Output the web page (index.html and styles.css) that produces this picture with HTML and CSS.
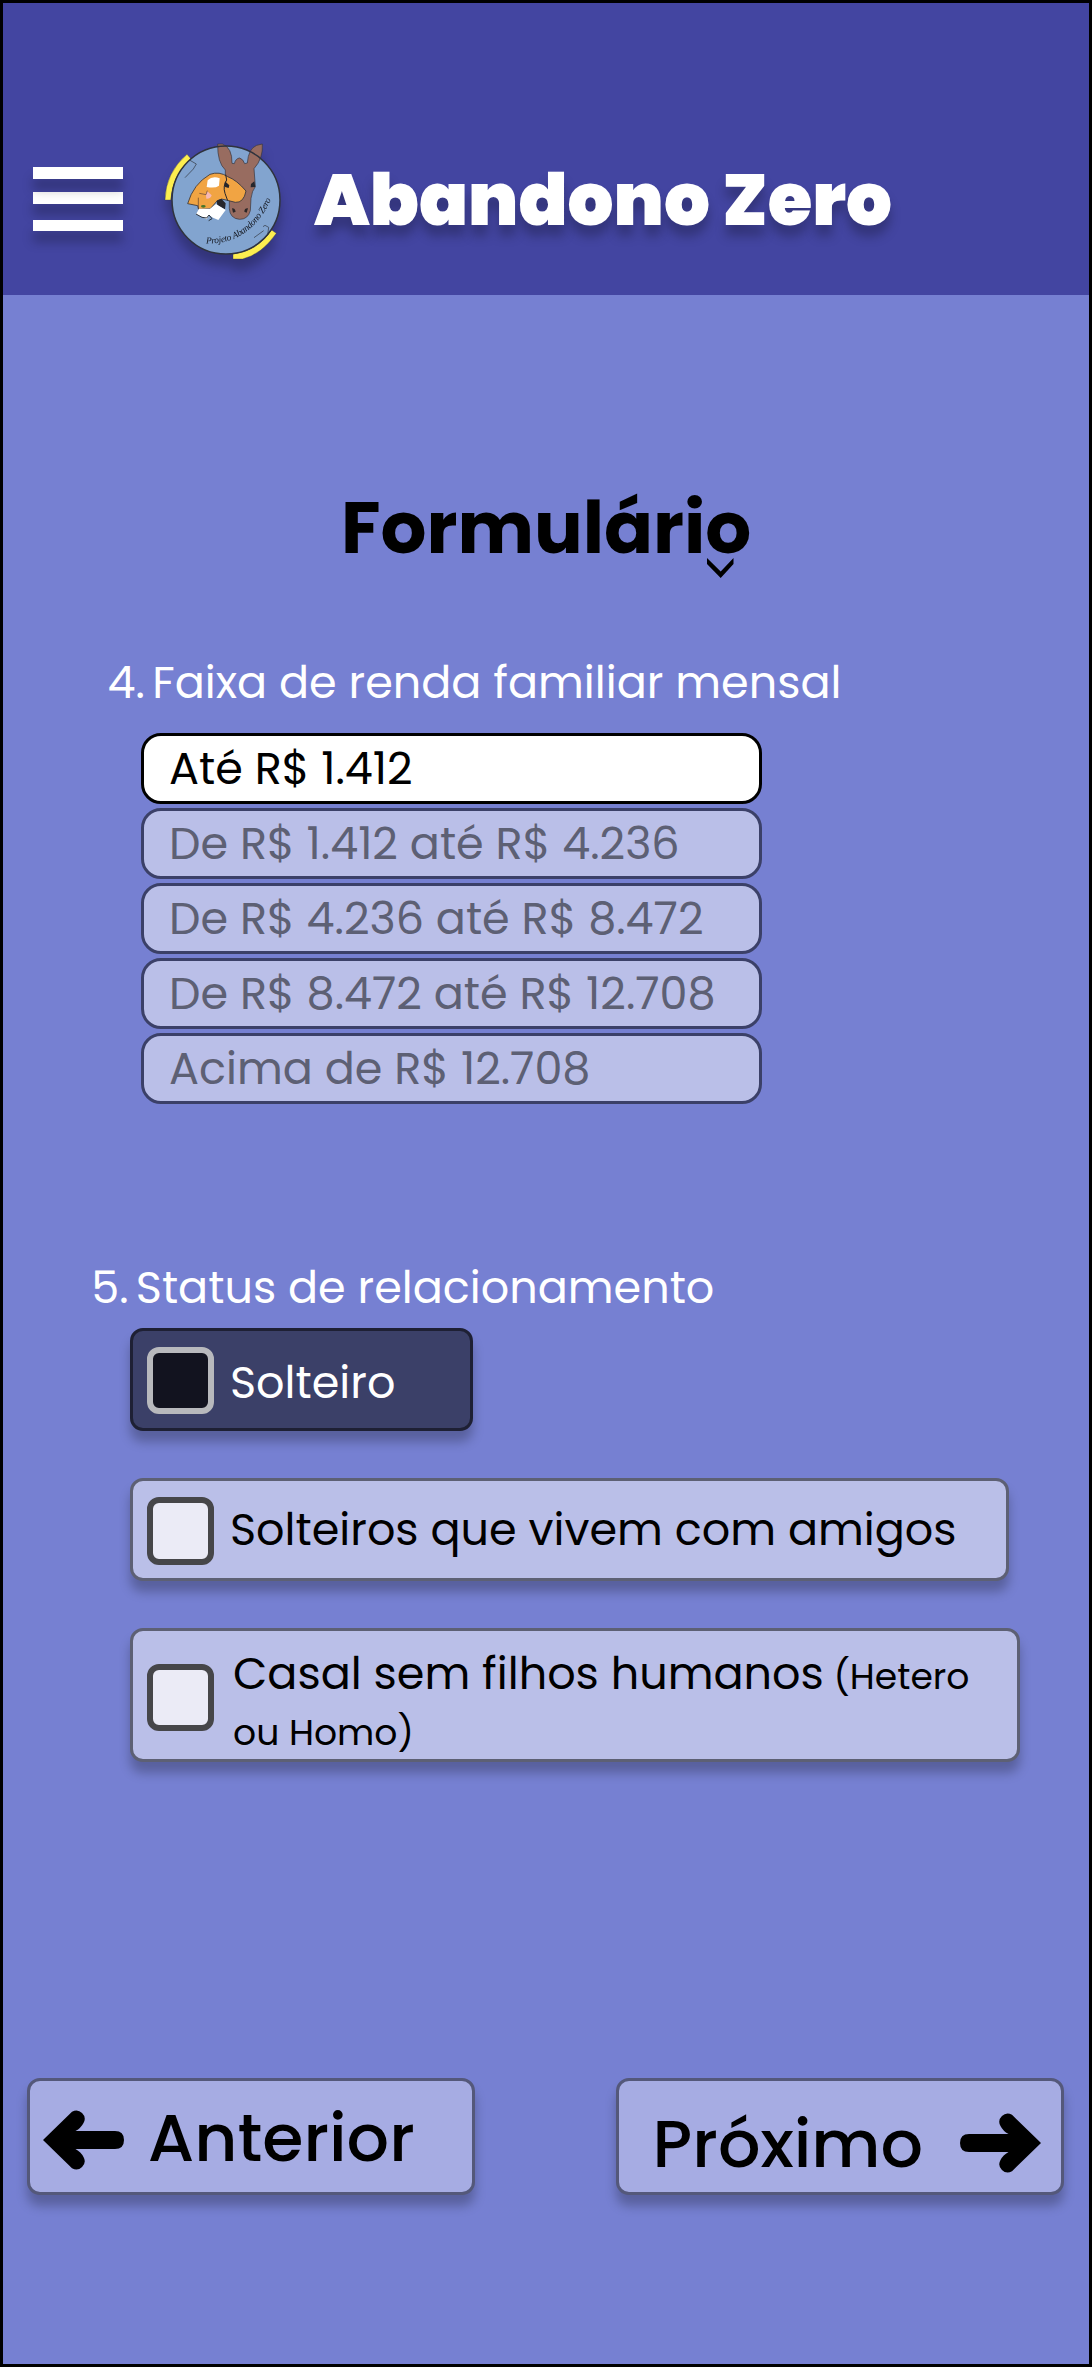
FILE: index.html
```html
<!DOCTYPE html>
<html lang="pt-BR">
<head>
<meta charset="utf-8">
<title>Abandono Zero</title>
<link rel="stylesheet" href="styles.css">
</head>
<body>
<div class="page">
  <header class="topbar">
    <div class="menu"><span class="bar bar-first"></span><span class="bar bar-mid"></span><span class="bar"></span></div>
    <svg class="logo" viewBox="0 0 480 420">
      <path d="M141 73 L154 88 Q98 132 92 210 L75 210 Q77 128 141 73Z" fill="#fdee50" stroke="#33343c" stroke-width="1"/>
      <path d="M395 300 L409 310 Q365 373 308 387 L279 387 L279 372 Q352 364 395 300Z" fill="#fdee50" stroke="#33343c" stroke-width="1"/>
      <circle cx="258" cy="210" r="162" fill="#82a4cf"/>
      <path d="M233 42 L247 42 Q277 53 276 100 L283 101 Q287 85 299 84 Q310 88 314 101 L322 99 Q325 56 350 46 L367 42 Q370 85 342 116 L345 156 L346 170 Q336 182 333 205 L331 242 Q324 268 299 268 Q270 266 268 236 L268 210 L256 170 L256 120 Q232 98 233 42Z" fill="#986c60" stroke="#33343c" stroke-width="2"/>
      <path d="M143 221 Q160 162 210 133 Q238 123 263 140 Q290 150 318 183 Q311 219 286 217 L262 211 Q244 203 232 212 L211 236 L176 238 L173 227Z" fill="#f1a443" stroke="#33343c" stroke-width="2.5"/>
      <path d="M203 151 Q217 137 239 145 L237 167 Q225 176 200 171Z" fill="#fff"/>
      <path d="M257 134 L260 150 Q248 168 255 190 L263 212" fill="none" stroke="#26252b" stroke-width="3"/>
      <path d="M255 154 L268 166 L266 174 L253 170Z M333 162 L343 154 L346 171 L332 172Z M230 212 L244 206 L257 220 L255 238 L232 226Z" fill="#26262c"/>
      <path d="M178 190 L196 194 L202 184 L215 196 Q212 207 199 206 L198 196" fill="#f6b8b5"/>
      <path d="M178 190 L198 194 L202 182 M175 203 L175 237" fill="none" stroke="#5a3d2b" stroke-width="2"/>
      <path d="M177 236 L210 236 L228 222 L257 240 L235 270 L219 263 L208 256 L200 268 L184 260 L168 253Z" fill="#fff"/>
      <path d="M168 252 L186 262 L200 264 L207 255 L216 266 L206 272" fill="none" stroke="#28303a" stroke-width="3"/>
      <ellipse cx="190" cy="229" rx="7" ry="4" fill="#47752b"/>
      <path d="M276 235 Q285 234 287 245 L279 248Z M324 235 Q313 234 313 245 L320 248Z" fill="#2b2627"/>
      <circle cx="258" cy="210" r="162" fill="none" stroke="#2f333d" stroke-width="4.5"/>
      <path d="M150 91 L169 102 L160 117 L135 143 M342 323 L371 302 M369 290 L375 286 L386 292 L383 315" fill="none" stroke="#2f333d" stroke-width="2"/>
      <path id="motto" d="M198 340 Q334 346 398 198" fill="none"/>
      <text class="motto"><textPath href="#motto" textLength="252">Projeto Abandono Zero</textPath></text>
    </svg>
    <div class="brand">Abandono Zero</div>
  </header>

  <h1 class="title">Formulário
    <svg class="chevron" viewBox="0 0 27 20"><path d="M0 0 L13.7 13.4 L26.5 0 V6 L13.7 20 L0 6Z"/></svg>
  </h1>

  <h2 class="question q4"><span class="num">4.</span><span>Faixa de renda familiar mensal</span></h2>
  <div class="options">
    <div class="option selected">Até R$ 1.412</div>
    <div class="option">De R$ 1.412 até R$ 4.236</div>
    <div class="option">De R$ 4.236 até R$ 8.472</div>
    <div class="option">De R$ 8.472 até R$ 12.708</div>
    <div class="option">Acima de R$ 12.708</div>
  </div>

  <h2 class="question q5"><span class="num">5.</span><span>Status de relacionamento</span></h2>
  <div class="cards">
    <div class="card card-on"><span class="check"></span><span class="label">Solteiro</span></div>
    <div class="card card-friends"><span class="check"></span><span class="label">Solteiros que vivem com amigos</span></div>
    <div class="card card-couple"><span class="check"></span><span class="label">Casal sem filhos humanos<small> (Hetero</small><br><small>ou Homo)</small></span></div>
  </div>

  <nav class="nav">
    <div class="button prev">
      <svg class="arrow" viewBox="0 0 82 62"><path d="M0 31 L29 2.8 A8.3 8.3 0 0 1 40.5 14 Q38 19 32.5 22 L72 22 Q81 22 81 31 Q81 40 72 40 L32.5 40 Q38 43 40.5 48 A8.3 8.3 0 0 1 29 59.2Z"/></svg>
      <span class="prev-text">Anterior</span>
    </div>
    <div class="button next">
      <span class="next-text">Próximo</span>
      <svg class="arrow" viewBox="0 0 82 62"><path d="M81 31 L52 2.8 A8.3 8.3 0 0 0 40.5 14 Q43 19 48.5 22 L9 22 Q0 22 0 31 Q0 40 9 40 L48.5 40 Q43 43 40.5 48 A8.3 8.3 0 0 0 52 59.2Z"/></svg>
    </div>
  </nav>
</div>
</body>
</html>
```
FILE: styles.css
```css
* { box-sizing: border-box; }
body { margin: 0; }
.page {
  width: 1092px;
  height: 2367px;
  border: 3px solid #000;
  background: #7680d2;
  font-family: Poppins, Inter, sans-serif;
  font-size: 44.5px;
  color: #000;
  white-space: nowrap;
  overflow: hidden;
}

/* Header */
.topbar {
  display: flex;
  align-items: center;
  height: 292px;
  padding: 103px 0 1px 30px;
  background: #4345a1;
}
.menu { width: 89.5px; height: 66px; }
.bar {
  display: block;
  height: 11.5px;
  margin-bottom: 16px;
  background: #fff;
  box-shadow: 0 11px 11px rgba(0, 0, 0, .25);
}
.bar-first { position: relative; z-index: 1; margin-bottom: 13.5px; }
.logo {
  width: 160px;
  height: 140px;
  margin-left: 17.5px;
  filter: drop-shadow(0 11px 5.5px rgba(0, 0, 0, .25));
}
.motto { font: italic 28px "Liberation Serif", serif; fill: #14171f; }
.brand {
  margin-left: 14px;
  font-size: 72.25px;
  font-weight: 900;
  line-height: 80px;
  color: #fff;
  text-shadow: 0 11px 11px rgba(0, 0, 0, .25);
}

.title {
  position: relative;
  height: 80px;
  margin: 193px 0 0 338px;
  font-size: 72.25px;
  font-weight: 700;
  line-height: 80px;
}
.chevron { position: absolute; left: 366px; top: 70px; width: 27px; height: 20px; }

/* Questions */
.question {
  display: flex;
  margin: 0;
  font-size: 44.5px;
  font-weight: 400;
  line-height: 60px;
  color: #fff;
}
.q4 { margin: 84.5px 0 20.5px 104.5px; }
.q4 .num { width: 44.8px; }
.q5 { margin: 154.3px 0 10px 88.3px; }
.q5 .num { width: 44.5px; }

.options { display: flex; flex-direction: column; gap: 4.3px; width: 621px; margin-left: 138px; }
.option {
  height: 70.7px;
  padding-left: 25px;
  border: 3px solid #3b4068;
  border-radius: 20px;
  background: #babfe8;
  line-height: 65px;
  color: #5d6074;
}
.option.selected { border-color: #000; background: #fff; color: #000; }

.cards { display: flex; flex-direction: column; gap: 47px; margin-left: 127px; }
.card {
  display: flex;
  align-items: center;
  height: 103px;
  padding-left: 14px;
  border: 3px solid #5d6074;
  border-radius: 13px;
  background: #babfe8;
  box-shadow: 0 11px 11px rgba(0, 0, 0, .25);
}
.check {
  flex: none;
  width: 67px;
  height: 67.5px;
  margin-right: 16px;
  border: 6px solid #464649;
  border-radius: 12px;
  background: #ebebf6;
}
.card-on { width: 343px; padding-top: 2px; border-color: #1e2034; background: #3b4068; color: #fff; }
.card-on .check { border-color: #b8b9bd; background: #12131f; }
.card-on .label { padding-top: 4px; }
.card-friends { width: 879px; padding-top: 3px; }
.card-friends .label { padding-bottom: 3px; }
.card-couple { width: 890px; height: 133.7px; padding-top: 5.5px; }
.card-couple .label { padding: 8px 0 0 3px; line-height: 56px; }
.label small { font-size: 36.15px; line-height: 1; }

/* Navigation */
.nav { display: flex; justify-content: space-between; margin: 316.3px 25px 0 24px; }
.button {
  display: flex;
  width: 448px;
  height: 116.7px;
  border: 3px solid #54587a;
  border-radius: 13px;
  background: #a6ace3;
  box-shadow: 0 11px 11px rgba(0, 0, 0, .25);
  font-size: 66.7px;
  font-weight: 500;
  line-height: 80px;
}
.arrow { width: 82px; height: 62px; }
.prev { padding: 17px 0 0 12.5px; }
.prev .arrow { margin-top: 11.5px; }
.prev-text { margin-left: 23.2px; }
.next { justify-content: space-between; padding: 23px 19px 0 33.6px; }
.next .arrow { margin-top: 8px; }
```
